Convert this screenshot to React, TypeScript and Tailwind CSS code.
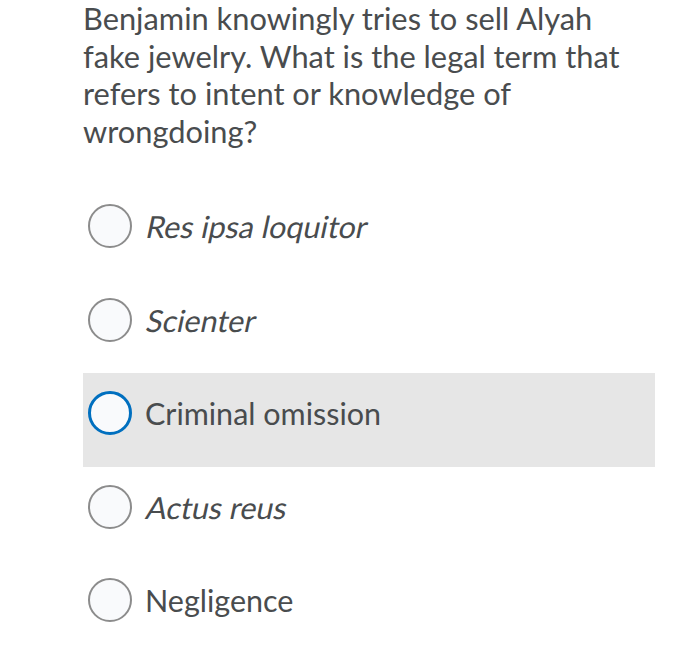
const OPTIONS = [
  { label: 'Res ipsa loquitor', italic: true },
  { label: 'Scienter', italic: true },
  { label: 'Criminal omission', italic: false, focused: true },
  { label: 'Actus reus', italic: true },
  { label: 'Negligence', italic: false },
]

export default function App() {
  return (
    <div className="w-[700px] h-[664px] bg-white overflow-hidden font-['Lato',sans-serif] text-[#494c4e]">
      <div className="ml-[83px] w-[572px]">
        <p className="w-[550px] text-[30.8px] leading-[37.5px]">
          Benjamin knowingly tries to sell Alyah fake jewelry. What is the legal term that refers to
          intent or knowledge of wrongdoing?
        </p>

        <div className="mt-[36px] flex flex-col">
          {OPTIONS.map((opt) => (
            <div
              key={opt.label}
              className={`flex items-start h-[93.5px] pt-[18px] pl-[5px] ${opt.focused ? 'bg-[#e6e6e6]' : ''}`}
            >
              <span
                className={`w-[44px] h-[44px] rounded-full bg-[#f9fafc] shrink-0 ${
                  opt.focused ? 'border-[3px] border-[#006fbf]' : 'border-2 border-[#8c8c8c]'
                }`}
              />
              <span
                className={`text-[30.5px] leading-[44px] ${
                  opt.italic ? 'inline-block -skew-x-12 ml-[15px]' : 'ml-[13px]'
                }`}
              >
                {opt.label}
              </span>
            </div>
          ))}
        </div>
      </div>
    </div>
  )
}
